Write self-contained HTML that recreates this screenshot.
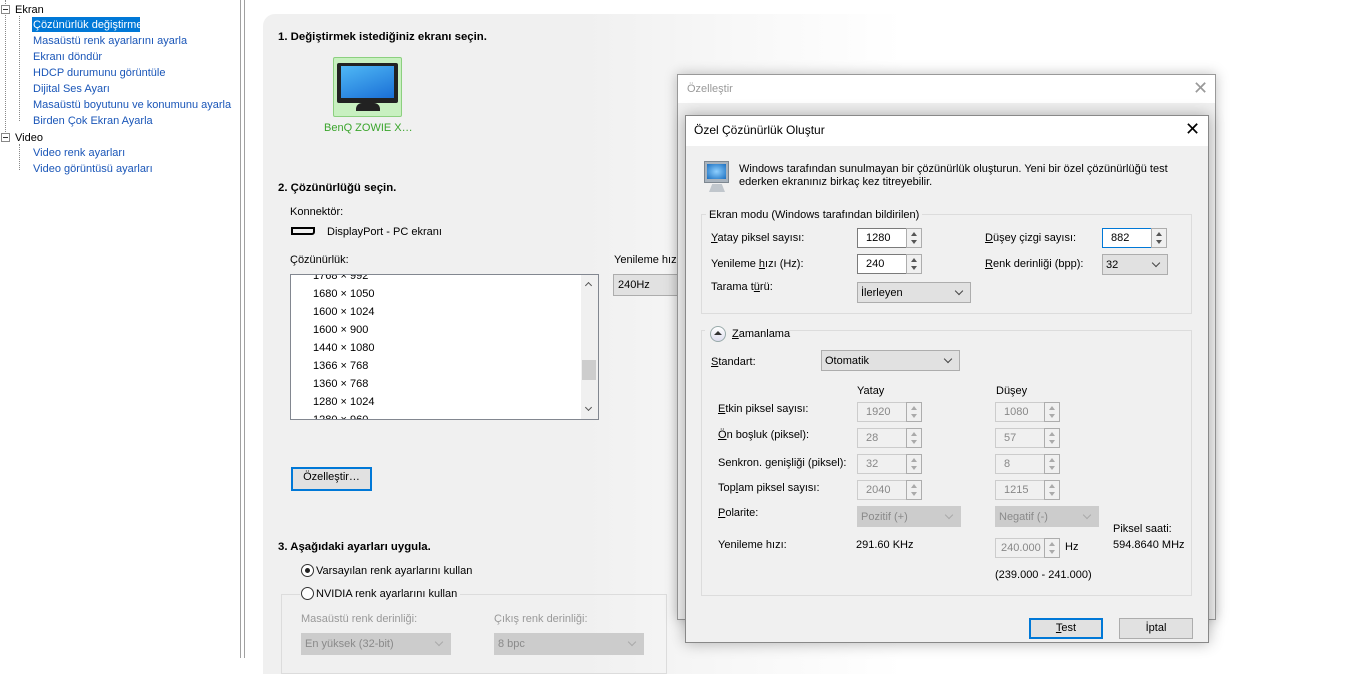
<!DOCTYPE html>
<html><head><meta charset="utf-8"><style>
*{box-sizing:border-box;margin:0;padding:0}
body{width:1363px;height:658px;overflow:hidden;background:#fff;font-family:"Liberation Sans",sans-serif;font-size:11px;color:#000;position:relative}
.a{position:absolute;white-space:nowrap}
.t{line-height:14px}
.b{font-weight:bold;font-size:11.4px}
.tree{color:#1a56b8}
.inp{position:absolute;background:#fff;border:1px solid #7a7a7a;height:20px;padding:2px 0 0 8px;line-height:14px}
.dis{background:#f0f0f0;border-color:#ccc;color:#888}
.spin{position:absolute;width:16px;height:20px;border:1px solid #adadad;background:#f0f0f0}
.spin:before{content:"";position:absolute;left:4px;top:3px;border:3px solid transparent;border-bottom:4px solid #555;border-top:0}
.spin:after{content:"";position:absolute;left:4px;top:11px;border:3px solid transparent;border-top:4px solid #555;border-bottom:0}
.spin.d:before{border-bottom-color:#aaa}.spin.d:after{border-top-color:#aaa}
.dd{position:absolute;background:#e1e1e1;border:1px solid #adadad;height:21px;padding:3px 0 0 3px;line-height:14px}
.dd:after{content:"";position:absolute;right:8px;top:5px;width:5px;height:5px;border-right:1px solid #444;border-bottom:1px solid #444;transform:rotate(45deg)}
.dd.x{background:#ccc;border-color:#ccc;color:#8a8a8a}
.dd.x:after{border-color:#aaa}
.gb{position:absolute;border:1px solid #dcdcdc}
.btn{position:absolute;background:#e1e1e1;border:1px solid #adadad;text-align:center;line-height:18px}
.btn.f{border:2px solid #0078d7;line-height:17px}
.u{text-decoration:underline}
</style></head><body>

<!-- left tree -->
<div class="a" style="left:240px;top:0;width:1px;height:658px;background:#a0a0a0"></div>
<div class="a" style="left:244px;top:0;width:1px;height:658px;background:#a0a0a0"></div>
<div class="a" style="left:5px;top:0;width:0;height:140px;border-left:1px dotted #888"></div>
<div class="a" style="left:19px;top:16px;width:0;height:105px;border-left:1px dotted #888"></div>
<div class="a" style="left:19px;top:144px;width:0;height:26px;border-left:1px dotted #888"></div>
<div class="a" style="left:1px;top:5px;width:9px;height:9px;border:1px solid #888;background:#fff"></div>
<div class="a" style="left:3px;top:9px;width:5px;height:1px;background:#333"></div>
<div class="a" style="left:1px;top:133px;width:9px;height:9px;border:1px solid #888;background:#fff"></div>
<div class="a" style="left:3px;top:137px;width:5px;height:1px;background:#333"></div>
<div class="a t" style="left:15px;top:3px">Ekran</div>
<div class="a t" style="left:15px;top:131px">Video</div>
<div class="a" style="left:32px;top:17px;width:108px;height:15px;background:#0078d7"></div>
<div class="a t" style="left:33px;top:18px;color:#fff">Çözünürlük değiştirme</div>
<div class="a t tree" style="left:33px;top:34px">Masaüstü renk ayarlarını ayarla</div>
<div class="a t tree" style="left:33px;top:50px">Ekranı döndür</div>
<div class="a t tree" style="left:33px;top:66px">HDCP durumunu görüntüle</div>
<div class="a t tree" style="left:33px;top:82px">Dijital Ses Ayarı</div>
<div class="a t tree" style="left:33px;top:98px">Masaüstü boyutunu ve konumunu ayarla</div>
<div class="a t tree" style="left:33px;top:114px">Birden Çok Ekran Ayarla</div>
<div class="a t tree" style="left:33px;top:146px">Video renk ayarları</div>
<div class="a t tree" style="left:33px;top:162px">Video görüntüsü ayarları</div>

<!-- main panel -->
<div class="a" style="left:263px;top:14px;width:700px;height:660px;background:linear-gradient(90deg,#f0f0f0 0,#f0f0f0 320px,#f8f8f8 480px,#fff 640px);border-radius:12px 0 0 0"></div>
<div class="a t b" style="left:278px;top:30px">1. Değiştirmek istediğiniz ekranı seçin.</div>
<div class="a" style="left:333px;top:57px;width:69px;height:60px;background:#c8f0c0;border:1px solid #8cd07f;border-radius:2px"></div>
<div class="a" style="left:337px;top:63px;width:61px;height:40px;background:#222;border-radius:2px"></div>
<div class="a" style="left:341px;top:66px;width:53px;height:32px;background:linear-gradient(160deg,#4fb8f5,#1a6fd6)"></div>
<div class="a" style="left:356px;top:103px;width:24px;height:8px;background:#222;border-radius:6px 6px 0 0"></div>
<div class="a t" style="left:324px;top:121px;color:#3aa52c">BenQ ZOWIE X…</div>

<div class="a t b" style="left:278px;top:181px">2. Çözünürlüğü seçin.</div>
<div class="a t" style="left:290px;top:205px">Konnektör:</div>
<div class="a" style="left:291px;top:227px;width:24px;height:8px;border:2px solid #000;border-radius:0 0 3px 0"></div>
<div class="a t" style="left:327px;top:225px">DisplayPort - PC ekranı</div>
<div class="a t" style="left:290px;top:253px">Çözünürlük:</div>
<div class="a" style="left:290px;top:274px;width:309px;height:146px;background:#fff;border:1px solid #828790;overflow:hidden">
 <div class="a t" style="left:22px;top:-6px">1768 × 992</div>
 <div class="a t" style="left:22px;top:12px">1680 × 1050</div>
 <div class="a t" style="left:22px;top:30px">1600 × 1024</div>
 <div class="a t" style="left:22px;top:48px">1600 × 900</div>
 <div class="a t" style="left:22px;top:66px">1440 × 1080</div>
 <div class="a t" style="left:22px;top:84px">1366 × 768</div>
 <div class="a t" style="left:22px;top:102px">1360 × 768</div>
 <div class="a t" style="left:22px;top:120px">1280 × 1024</div>
 <div class="a t" style="left:22px;top:138px">1280 × 960</div>
 <div class="a" style="left:290px;top:0;width:17px;height:144px;background:#f0f0f0"></div>
 <div class="a" style="left:291px;top:85px;width:14px;height:20px;background:#cdcdcd"></div>
 <div class="a" style="left:295px;top:8px;width:5px;height:5px;border-left:1px solid #555;border-top:1px solid #555;transform:rotate(45deg)"></div>
 <div class="a" style="left:295px;top:130px;width:5px;height:5px;border-right:1px solid #555;border-bottom:1px solid #555;transform:rotate(45deg)"></div>
</div>
<div class="a t" style="left:614px;top:253px">Yenileme hızı:</div>
<div class="a" style="left:613px;top:274px;width:80px;height:22px;background:#e1e1e1;border:1px solid #adadad;padding:4px 0 0 4px">240Hz</div>
<div class="btn f" style="left:291px;top:467px;width:81px;height:24px">Özelleştir…</div>

<div class="a t b" style="left:278px;top:540px">3. Aşağıdaki ayarları uygula.</div>
<div class="gb" style="left:281px;top:594px;width:386px;height:80px"></div>
<div class="a" style="left:301px;top:564px;width:13px;height:13px;border:1px solid #333;border-radius:50%;background:#fff"></div>
<div class="a" style="left:305px;top:568px;width:5px;height:5px;border-radius:50%;background:#222"></div>
<div class="a t" style="left:316px;top:564px">Varsayılan renk ayarlarını kullan</div>
<div class="a" style="left:300px;top:587px;width:160px;height:14px;background:#f0f0f0"></div>
<div class="a" style="left:301px;top:587px;width:13px;height:13px;border:1px solid #333;border-radius:50%;background:#fff"></div>
<div class="a t" style="left:316px;top:587px">NVIDIA renk ayarlarını kullan</div>
<div class="a t" style="left:301px;top:612px;color:#999">Masaüstü renk derinliği:</div>
<div class="a t" style="left:494px;top:612px;color:#999">Çıkış renk derinliği:</div>
<div class="dd x" style="left:301px;top:633px;width:150px;height:22px">En yüksek (32-bit)</div>
<div class="dd x" style="left:494px;top:633px;width:150px;height:22px">8 bpc</div>

<!-- outer dialog -->
<div class="a" style="left:677px;top:74px;width:539px;height:546px;background:#f0f0f0;border:1px solid #999;box-shadow:0 0 12px rgba(0,0,0,.25)"></div>
<div class="a" style="left:678px;top:75px;width:537px;height:28px;background:#fff"></div>
<div class="a t" style="left:687px;top:82px;color:#999">Özelleştir</div>
<div class="a" style="left:1193px;top:80px;font-size:18px;color:#999;line-height:16px">✕</div>

<!-- inner dialog -->
<div class="a" style="left:685px;top:115px;width:524px;height:528px;background:#f0f0f0;border:1px solid #888;box-shadow:0 0 14px rgba(0,0,0,.3)"></div>
<div class="a" style="left:686px;top:116px;width:522px;height:30px;background:#fff"></div>
<div class="a t" style="left:694px;top:123px;font-size:12px">Özel Çözünürlük Oluştur</div>
<div class="a" style="left:1185px;top:120px;font-size:18px;line-height:18px">✕</div>

<div class="a" style="left:704px;top:161px;width:25px;height:22px;background:#a9b3bd;border:1px solid #7d8790"></div>
<div class="a" style="left:707px;top:164px;width:19px;height:15px;background:radial-gradient(#8fd0ff,#1a6fc0)"></div>
<div class="a" style="left:709px;top:184px;width:16px;height:8px;background:#c0c6cc;clip-path:polygon(20% 0,80% 0,100% 100%,0 100%)"></div>
<div class="a t" style="left:739px;top:162px">Windows tarafından sunulmayan bir çözünürlük oluşturun. Yeni bir özel çözünürlüğü test</div>
<div class="a t" style="left:739px;top:175px">ederken ekranınız birkaç kez titreyebilir.</div>

<div class="gb" style="left:701px;top:214px;width:491px;height:100px"></div>
<div class="a t" style="left:706px;top:208px;background:#f0f0f0;padding:0 3px">Ekran modu (Windows tarafından bildirilen)</div>
<div class="a t" style="left:711px;top:231px"><span class="u">Y</span>atay piksel sayısı:</div>
<div class="inp" style="left:857px;top:228px;width:50px">1280</div><div class="spin" style="left:906px;top:228px"></div>
<div class="a t" style="left:711px;top:257px">Yenileme <span class="u">h</span>ızı (Hz):</div>
<div class="inp" style="left:857px;top:254px;width:50px">240</div><div class="spin" style="left:906px;top:254px"></div>
<div class="a t" style="left:711px;top:280px">Tarama t<span class="u">ü</span>rü:</div>
<div class="dd" style="left:857px;top:282px;width:114px">İlerleyen</div>
<div class="a t" style="left:985px;top:231px"><span class="u">D</span>üşey çizgi sayısı:</div>
<div class="inp" style="left:1102px;top:228px;width:50px;border-color:#0078d7">882</div><div class="spin" style="left:1151px;top:228px"></div>
<div class="a t" style="left:985px;top:257px"><span class="u">R</span>enk derinliği (bpp):</div>
<div class="dd" style="left:1102px;top:254px;width:66px">32</div>

<div class="gb" style="left:701px;top:330px;width:491px;height:266px"></div>
<div class="a" style="left:705px;top:325px;width:84px;height:18px;background:#f0f0f0"></div>
<div class="a" style="left:710px;top:326px;width:16px;height:16px;border:1px solid #9aa;border-radius:50%;background:linear-gradient(#fff,#dde)"></div>
<div class="a" style="left:714px;top:331px;border:4px solid transparent;border-bottom:4px solid #333;border-top:0"></div>
<div class="a t" style="left:732px;top:327px"><span class="u">Z</span>amanlama</div>
<div class="a t" style="left:711px;top:355px"><span class="u">S</span>tandart:</div>
<div class="dd" style="left:821px;top:350px;width:139px">Otomatik</div>
<div class="a t" style="left:857px;top:384px">Yatay</div>
<div class="a t" style="left:996px;top:384px">Düşey</div>

<div class="a t" style="left:718px;top:402px"><span class="u">E</span>tkin piksel sayısı:</div>
<div class="inp dis" style="left:857px;top:402px;width:50px">1920</div><div class="spin d" style="left:906px;top:402px"></div>
<div class="inp dis" style="left:995px;top:402px;width:50px">1080</div><div class="spin d" style="left:1044px;top:402px"></div>
<div class="a t" style="left:718px;top:428px"><span class="u">Ö</span>n boşluk (piksel):</div>
<div class="inp dis" style="left:857px;top:428px;width:50px">28</div><div class="spin d" style="left:906px;top:428px"></div>
<div class="inp dis" style="left:995px;top:428px;width:50px">57</div><div class="spin d" style="left:1044px;top:428px"></div>
<div class="a t" style="left:718px;top:456px">Senkron. <span class="u">g</span>enişliği (piksel):</div>
<div class="inp dis" style="left:857px;top:454px;width:50px">32</div><div class="spin d" style="left:906px;top:454px"></div>
<div class="inp dis" style="left:995px;top:454px;width:50px">8</div><div class="spin d" style="left:1044px;top:454px"></div>
<div class="a t" style="left:718px;top:481px">Top<span class="u">l</span>am piksel sayısı:</div>
<div class="inp dis" style="left:857px;top:480px;width:50px">2040</div><div class="spin d" style="left:906px;top:480px"></div>
<div class="inp dis" style="left:995px;top:480px;width:50px">1215</div><div class="spin d" style="left:1044px;top:480px"></div>
<div class="a t" style="left:718px;top:506px"><span class="u">P</span>olarite:</div>
<div class="dd x" style="left:857px;top:506px;width:104px">Pozitif (+)</div>
<div class="dd x" style="left:995px;top:506px;width:104px">Negatif (-)</div>
<div class="a t" style="left:718px;top:538px">Yenileme hızı:</div>
<div class="a t" style="left:856px;top:538px">291.60 KHz</div>
<div class="inp dis" style="left:995px;top:538px;width:50px;padding-left:5px">240.000</div><div class="spin d" style="left:1044px;top:538px"></div>
<div class="a t" style="left:1065px;top:540px">Hz</div>
<div class="a t" style="left:1113px;top:522px">Piksel saati:</div>
<div class="a t" style="left:1113px;top:538px">594.8640 MHz</div>
<div class="a t" style="left:995px;top:568px">(239.000 - 241.000)</div>

<div class="btn f" style="left:1029px;top:618px;width:74px;height:21px"><span class="u">T</span>est</div>
<div class="btn" style="left:1119px;top:618px;width:74px;height:21px">İptal</div>
</body></html>
